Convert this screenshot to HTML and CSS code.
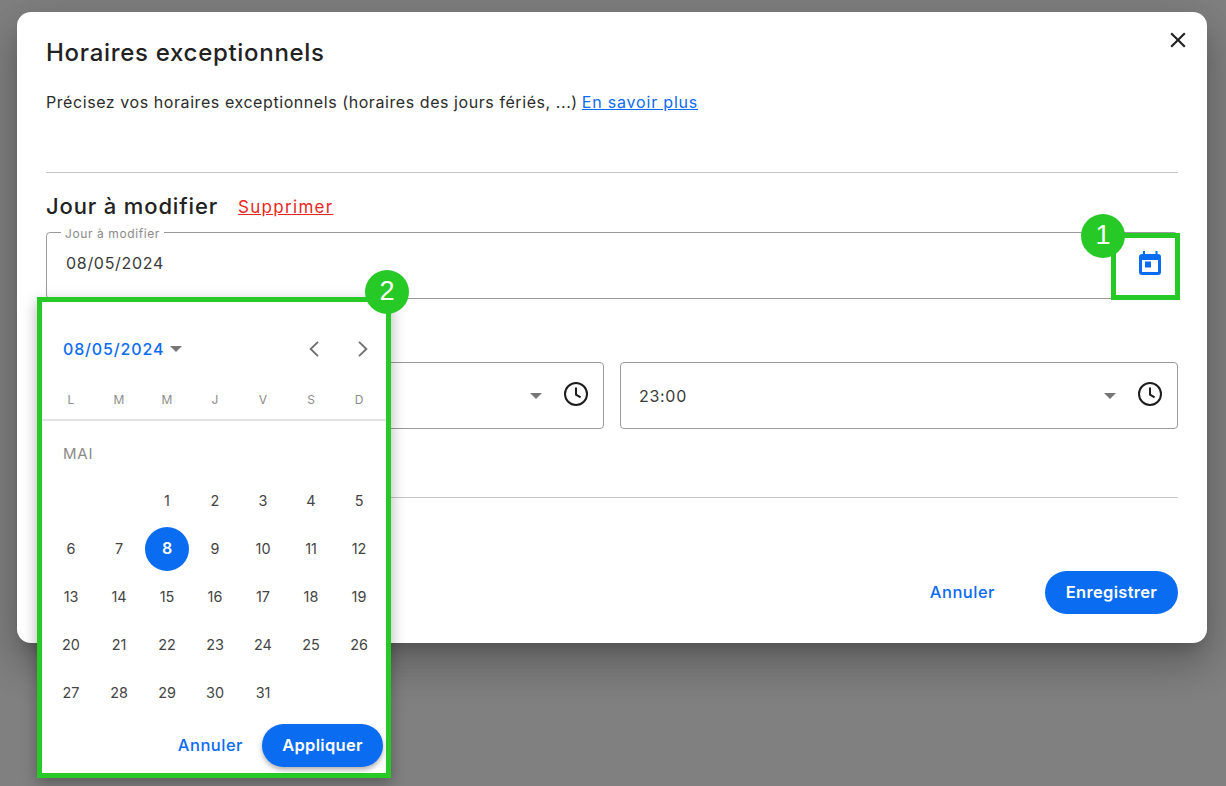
FILE: index.html
```html
<!DOCTYPE html>
<html lang="fr">
<head>
<meta charset="utf-8">
<title>Horaires exceptionnels</title>
<link rel="stylesheet" href="styles.css">
</head>
<body>
<main class="modal">
  <button class="close" aria-label="Fermer">
    <svg width="26" height="26" viewBox="0 0 24 24"><path d="M19 6.41 17.59 5 12 10.59 6.41 5 5 6.41 10.59 12 5 17.59 6.41 19 12 13.41 17.59 19 19 17.59 13.41 12z"/></svg>
  </button>
  <h1 class="title">Horaires exceptionnels</h1>
  <p class="intro">Précisez vos horaires exceptionnels (horaires des jours fériés, ...) <a href="#" class="link">En savoir plus</a></p>
  <hr class="rule rule-top">
  <div class="section-head">
    <h2 class="subtitle">Jour à modifier</h2>
    <a href="#" class="remove">Supprimer</a>
  </div>
  <fieldset class="field date-field">
    <legend class="legend">Jour à modifier</legend>
    <span class="value">08/05/2024</span>
    <svg class="cal" width="22" height="24" viewBox="0 0 22 24"><path fill-rule="evenodd" d="M4 0h2v3h10.5V0h2v3h.5a3 3 0 0 1 3 3v15a3 3 0 0 1-3 3H3a3 3 0 0 1-3-3V6a3 3 0 0 1 3-3h1zM3 9v12h16V9zm3 1.5h6v6H6z"/></svg>
  </fieldset>
  <div class="times">
    <div class="field time-field">
      <span class="value"></span>
      <span class="caret"></span>
      <svg class="clock" width="26" height="26" viewBox="0 0 26 26"><circle cx="13" cy="13" r="11"/><path d="M13 6.5V13.6l4.6 2.8"/></svg>
    </div>
    <div class="field time-field">
      <span class="value">23:00</span>
      <span class="caret"></span>
      <svg class="clock" width="26" height="26" viewBox="0 0 26 26"><circle cx="13" cy="13" r="11"/><path d="M13 6.5V13.6l4.6 2.8"/></svg>
    </div>
  </div>
  <hr class="rule rule-bottom">
  <div class="actions">
    <button class="text-btn">Annuler</button>
    <button class="primary save">Enregistrer</button>
  </div>
</main>

<section class="picker">
  <div class="picker-head">
    <span class="picker-date">08/05/2024</span>
    <span class="caret"></span>
    <span class="nav">
      <svg width="18" height="18" viewBox="0 0 18 18"><path d="M13 1.8 5.6 9l7.4 7.2"/></svg>
      <svg width="18" height="18" viewBox="0 0 18 18"><path d="M5 1.8 12.4 9 5 16.2"/></svg>
    </span>
  </div>
  <div class="weekdays"><span>L</span><span>M</span><span>M</span><span>J</span><span>V</span><span>S</span><span>D</span></div>
  <div class="month">MAI</div>
  <div class="days">
    <span></span><span></span><span>1</span><span>2</span><span>3</span><span>4</span><span>5</span>
    <span>6</span><span>7</span><span class="selected">8</span><span>9</span><span>10</span><span>11</span><span>12</span>
    <span>13</span><span>14</span><span>15</span><span>16</span><span>17</span><span>18</span><span>19</span>
    <span>20</span><span>21</span><span>22</span><span>23</span><span>24</span><span>25</span><span>26</span>
    <span>27</span><span>28</span><span>29</span><span>30</span><span>31</span><span></span><span></span>
  </div>
  <div class="picker-actions">
    <button class="text-btn">Annuler</button>
    <button class="primary apply">Appliquer</button>
  </div>
</section>

<div class="frame frame-cal"></div>
<div class="badge badge-1">1</div>
<div class="badge badge-2">2</div>
</body>
</html>
```

FILE: styles.css
```css
* { box-sizing: border-box; }
html, body { height: 100%; }
body {
  margin: 0;
  height: 786px;
  overflow: hidden;
  position: relative;
  background: #808080;
  font-family: Inter, "Open Sans", sans-serif;
  color: #2b2b2b;
  padding: 12px 19px 0 17px;
}
button { font-family: inherit; border: 0; background: none; cursor: pointer; padding: 0 0 2px; }

.modal {
  position: relative;
  height: 631px;
  background: #fff;
  border-radius: 14px;
  padding: 27px 29px 0;
  box-shadow: 0 11px 15px -7px rgba(0,0,0,.2), 0 24px 38px 3px rgba(0,0,0,.14), 0 9px 46px 8px rgba(0,0,0,.12);
}
.close { position: absolute; top: 15px; right: 16px; width: 26px; height: 26px; padding: 0; }
.close svg { display: block; fill: #222; }

.title { margin: 0; font-size: 24px; line-height: 28px; font-weight: 500; letter-spacing: .7px; color: #222; }
.intro { margin: 24px 0 0; font-size: 16px; line-height: 22px; letter-spacing: .57px; color: #2b2b2b; white-space: nowrap; }
.link { color: #0a6cf0; letter-spacing: .8px; margin-left: -1px; }
.rule { border: 0; height: 1px; margin: 0; background: #c4c4c4; }
.rule-top { margin-top: 59px; }

.section-head { display: flex; align-items: center; gap: 20px; margin-top: 19px; }
.subtitle { margin: 0; font-size: 22px; line-height: 28px; font-weight: 500; letter-spacing: .85px; color: #222; }
.remove { font-size: 17px; letter-spacing: 1.3px; color: #e6281e; margin-top: 2px; }

.field {
  position: relative;
  display: flex;
  align-items: center;
  margin: 0;
  border: 1px solid #9a9a9a;
  border-radius: 4px;
  background: #fff;
}
.date-field { margin-top: 7px; height: 73px; padding: 0 19px; top: -1px; margin-bottom: -6px; }
.legend { font-size: 12px; line-height: 12px; letter-spacing: .6px; padding: 0 4px; margin-left: -5px; color: #8a8a8a; position: relative; top: 2px; }
.value { font-size: 16px; color: #3a3a3a; letter-spacing: .7px; }
.date-field .value { margin-top: -11px; }
.cal { position: absolute; right: 16px; top: 13px; fill: #0a6cf0; }

.times { display: grid; grid-template-columns: 1fr 1fr; gap: 16px; margin-top: 68px; }
.time-field { height: 67px; padding: 0 14px 0 18px; }
.time-field .value { flex: 1; }
.caret { width: 0; height: 0; border-left: 6px solid transparent; border-right: 6px solid transparent; border-top: 6px solid #777; }
.clock { margin-left: 21px; margin-top: -3px; fill: none; stroke: #1d1d1d; stroke-width: 2; }

.rule-bottom { margin-top: 68px; }
.actions { display: flex; justify-content: flex-end; align-items: center; gap: 50px; margin-top: 73px; }
.text-btn { color: #0a6cf0; font-size: 16.5px; font-weight: 500; letter-spacing: .5px; }
.primary { color: #fff; background: #0a6cf0; font-size: 16.5px; font-weight: 600; letter-spacing: .3px; height: 43px; border-radius: 22px; }
.save { width: 133px; }

.picker {
  position: absolute;
  left: 37px;
  top: 297px;
  width: 354px;
  height: 481px;
  background: #fff;
  border: 5px solid #27c927;
  box-shadow: 0 5px 14px rgba(0,0,0,.3);
}
.picker-head { display: flex; align-items: center; height: 24px; margin: 35px 14px 0 21px; }
.picker-date { font-size: 16px; font-weight: 500; letter-spacing: .85px; color: #0a6cf0; margin-right: 6px; }
.nav { margin-left: auto; display: flex; gap: 31px; }
.nav svg { display: block; fill: none; stroke: #6e6e6e; stroke-width: 1.8; }
.weekdays, .days { display: grid; grid-template-columns: repeat(7, 48px); }
.weekdays {
  margin-top: 31px;
  height: 29px;
  padding: 0 5px;
  border-bottom: 2px solid #e2e2e2;
  align-content: start;
  font-size: 12px;
  line-height: 15px;
  color: #8c8c8c;
  text-align: center;
}
.month { margin: 21px 0 0 21px; font-size: 15px; line-height: 24px; color: #8a8a8a; letter-spacing: .8px; }
.days { padding: 0 5px; margin-top: 10px; grid-auto-rows: 48px; font-size: 14.4px; color: #444; }
.days span { display: flex; align-items: center; justify-content: center; }
.days .selected { position: relative; z-index: 0; color: #fff; font-size: 16px; font-weight: 600; }
.days .selected::before { content: ""; position: absolute; z-index: -1; left: 2px; top: 3px; width: 44px; height: 44px; border-radius: 50%; background: #0a6cf0; }
.picker-actions { display: flex; justify-content: flex-end; align-items: center; gap: 19px; margin-right: 3px; margin-top: 8px; }
.apply { width: 121px; box-shadow: 0 3px 5px rgba(0,0,0,.3); }

.frame { position: absolute; border: 5px solid #27c927; }
.frame-cal { left: 1111px; top: 233px; width: 69px; height: 67px; }
.badge {
  position: absolute;
  width: 44px;
  height: 44px;
  border-radius: 50%;
  background: #27c927;
  color: #fff;
  font-family: "Liberation Sans", Arial, sans-serif;
  font-size: 27px;
  line-height: 42px;
  text-align: center;
}
.badge-1 { left: 1081px; top: 214px; }
.badge-2 { left: 365px; top: 270px; }
```
